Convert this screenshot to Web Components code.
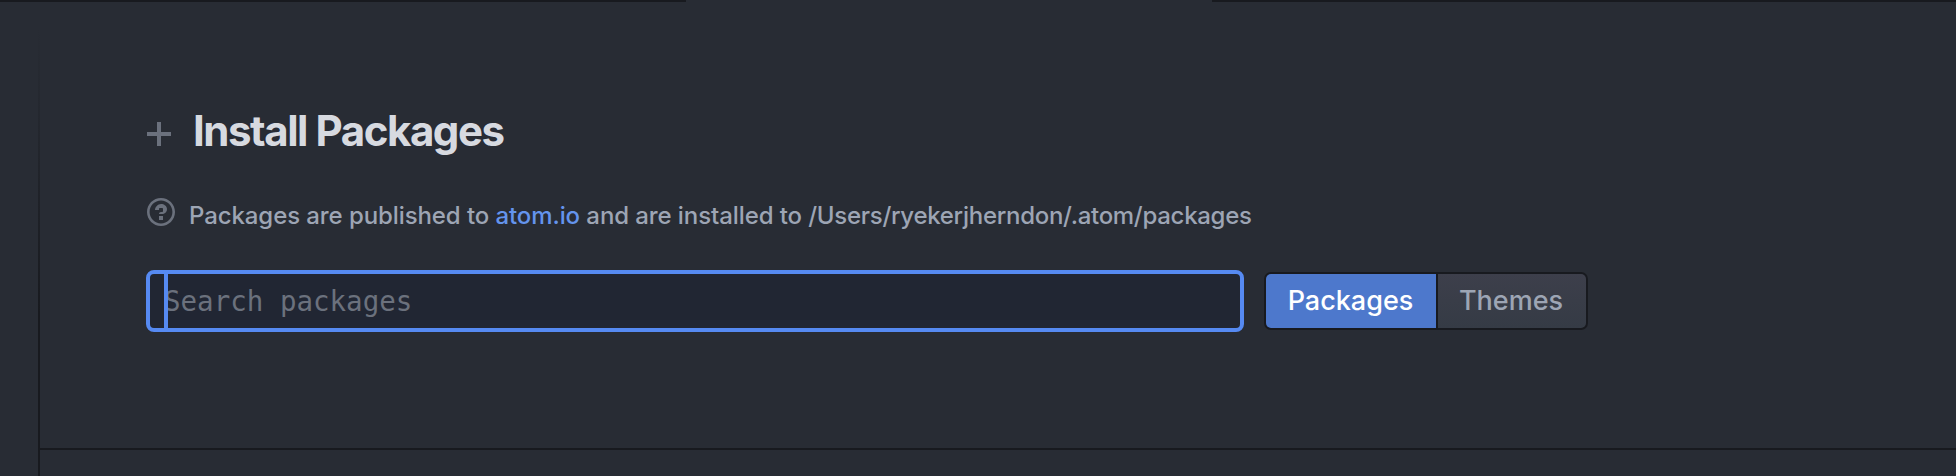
<!DOCTYPE html>
<html lang="en">
<head>
<meta charset="utf-8">
<title>Install Packages</title>
<style>
html, body { margin: 0; height: 100%; overflow: hidden; background: #282c34; font-family: Inter, "Liberation Sans", sans-serif; }
</style>
</head>
<body>
<settings-view></settings-view>
<script>
const define = (name, html) => customElements.define(name, class extends HTMLElement {
  constructor() { super(); this.attachShadow({ mode: 'open' }).innerHTML = html; }
});

define('section-heading', `
<style>
:host { display: flex; align-items: center; height: 60px; color: #d7dae0; }
svg { display: block; width: 24px; height: 24px; margin: 5px 22px 0 1px; }
h1 { margin: 0; font-size: 42px; line-height: 60px; font-weight: 750; letter-spacing: -1.45px; white-space: nowrap; }
</style>
<svg viewBox="0 0 24 24" fill="#6b717d"><path d="M10 0h4v10h10v4H14v10h-4V14H0v-4h10z"/></svg>
<h1><slot></slot></h1>`);

define('info-note', `
<style>
:host { display: flex; height: 32px; color: #9da5b4; }
svg { display: block; width: 28px; height: 32px; margin: -3px 14px 0 1px; flex: none; }
p { margin: 0; font-size: 24px; line-height: 34px; font-weight: 450; letter-spacing: -0.09px; white-space: nowrap; }
::slotted(a) { color: #6494ed; text-decoration: none; }
::slotted(span) { letter-spacing: -0.29px; }
</style>
<svg viewBox="0 0 14 16" fill="#6b717d"><path fill-rule="evenodd" d="M6 10h2v2H6v-2zm4-3.5C10 8.64 8 9 8 9H6c0-.55.45-1 1-1h.5c.28 0 .5-.22.5-.5v-1c0-.28-.22-.5-.5-.5h-1c-.28 0-.5.22-.5.5V7H4c0-1.5 1.5-3 3-3s3 1 3 2.5zM7 2.3c3.14 0 5.7 2.56 5.7 5.7s-2.56 5.7-5.7 5.7A5.71 5.71 0 0 1 1.3 8c0-3.14 2.56-5.7 5.7-5.7zM7 1C3.14 1 0 4.14 0 8s3.14 7 7 7 7-3.14 7-7-3.14-7-7-7z"/></svg>
<p><slot></slot></p>`);

define('search-field', `
<style>
:host { display: flex; box-sizing: border-box; width: 1098px; height: 62px; border: 4px solid #568af2; border-radius: 8px; background: #212633; padding-left: 14px; position: relative; }
i { position: absolute; left: 14px; top: 0; width: 4px; height: 54px; background: #568af2; }
span { font: 27.5px/54px "DejaVu Sans Mono", monospace; color: #6b717d; white-space: pre; }
</style>
<span><slot></slot></span><i></i>`);

define('button-group', `
<style>
:host { display: flex; box-sizing: border-box; width: 324px; height: 58px; border: 2px solid #181a1f; border-radius: 7px; overflow: hidden; background: #181a1f; gap: 2px; }
</style><slot></slot>`);

define('group-button', `
<style>
:host { flex: 1; display: flex; justify-content: center; box-sizing: border-box; padding-right: 2px; font-size: 27px; line-height: 54px; font-weight: 450; color: #9da5b4; background: linear-gradient(#3d3f4b, #353b45); }
:host([selected]) { flex: 0 0 170px; padding-right: 1px; color: #fff; background: #4d78cc; font-weight: 500; }
span { white-space: nowrap; }
</style><span><slot></slot></span>`);

define('settings-view', `
<style>
:host { display: grid; grid-template: 2px 1fr / 38px 2px 1fr; width: 1956px; height: 476px; background: #282c34; }
.tabs { grid-column: 1 / -1; display: grid; grid-template-columns: 686px 526px 1fr; }
.tabs b { background: #181a1f; }
.tabs b:last-child { grid-column: 3; }
.rule { grid-column: 2; background: linear-gradient(#181a1f00 24px, #181a1f44 120px, #181a1f 310px); }
main { grid-column: 3; display: flex; flex-direction: column; }
section { box-sizing: border-box; height: 448px; padding: 99px 0 0 106px; border-bottom: 2px solid #181a1f; }
info-note { margin-top: 38px; }
.row { display: flex; align-items: center; gap: 20px; margin-top: 39px; }
</style>
<div class="tabs"><b></b><b></b></div>
<div class="rule"></div>
<main><section>
<section-heading>Install Packages</section-heading>
<info-note>Packages are published to <a>atom.io</a> and are installed to <span>/Users/ryekerjherndon/.atom/packages</span></info-note>
<div class="row"><search-field>Search packages</search-field>
<button-group><group-button selected>Packages</group-button><group-button>Themes</group-button></button-group></div>
</section></main>`);
</script>
</body>
</html>
